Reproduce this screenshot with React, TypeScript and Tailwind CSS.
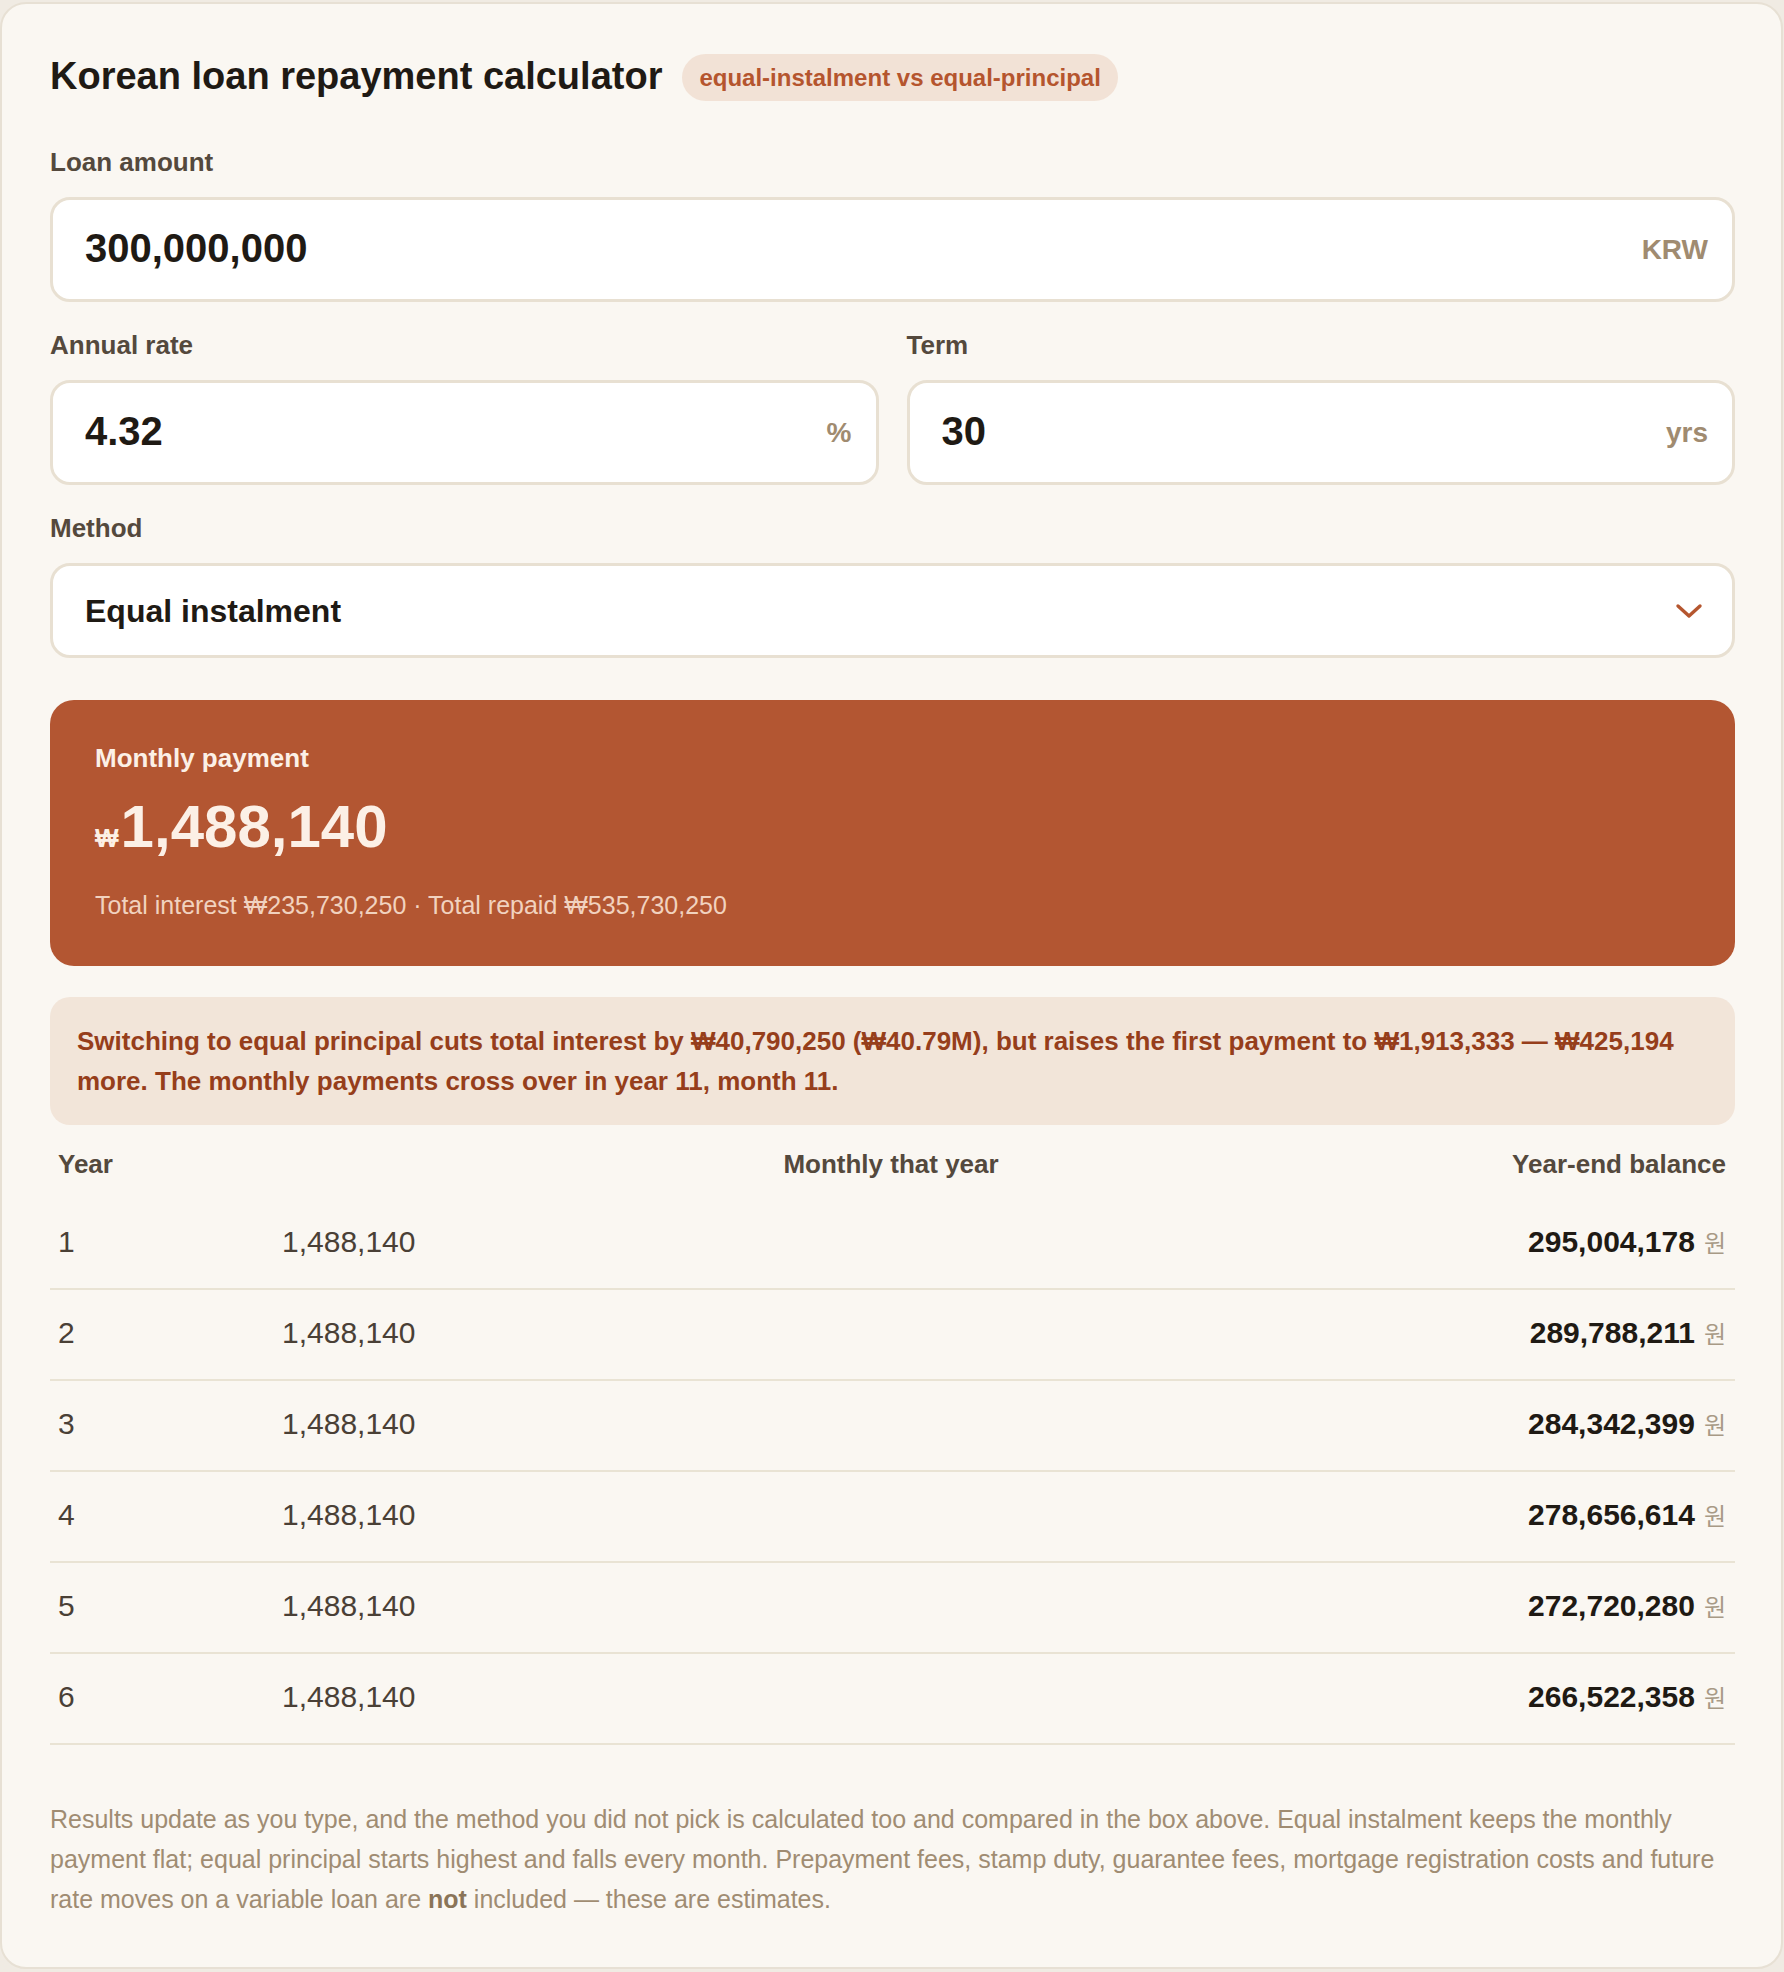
const rows = [
  { year: 1, monthly: "1,488,140", balance: "295,004,178" },
  { year: 2, monthly: "1,488,140", balance: "289,788,211" },
  { year: 3, monthly: "1,488,140", balance: "284,342,399" },
  { year: 4, monthly: "1,488,140", balance: "278,656,614" },
  { year: 5, monthly: "1,488,140", balance: "272,720,280" },
  { year: 6, monthly: "1,488,140", balance: "266,522,358" },
];

function Label({ children, className = "" }: { children: React.ReactNode; className?: string }) {
  return (
    <div className={`text-[26px] font-bold leading-[38px] text-[#54493d] mb-[16px] ${className}`}>{children}</div>
  );
}

function Field({ value, unit }: { value: string; unit: string }) {
  return (
    <div className="flex h-[105px] items-center rounded-[20px] border-[3px] border-[#e8e0d2] bg-white pl-[32px] pr-[24px]">
      <input
        readOnly
        value={value}
        className="mb-[4px] min-w-0 flex-1 bg-transparent text-[40px] font-bold text-[#1f1a14] outline-none"
      />
      <span className="text-[28px] font-bold text-[#a08b70]">{unit}</span>
    </div>
  );
}

export default function App() {
  return (
    <div className="min-h-screen bg-[#f0ebe3] pt-[2px] pr-[1px] font-['Liberation_Sans',Arial,sans-serif]">
      <div className="rounded-[26px] border-2 border-[#e7e0d4] bg-[#faf7f2] pl-[48px] pr-[46px] pt-[50px] pb-[48px]">
        {/* Heading */}
        <div className="flex h-[47px] items-center gap-[20px]">
          <h1 className="mb-[2px] text-[38px] font-bold text-[#1f1a14]">Korean loan repayment calculator</h1>
          <span className="flex h-[47px] items-center rounded-full bg-[#f2e2d6] px-[17px] text-[24px] font-bold text-[#b5552e]">
            equal-instalment vs equal-principal
          </span>
        </div>

        {/* Inputs */}
        <Label className="mt-[42px]">Loan amount</Label>
        <Field value="300,000,000" unit="KRW" />

        <div className="mt-[24px] grid grid-cols-2 gap-x-[28px]">
          <div>
            <Label>Annual rate</Label>
            <Field value="4.32" unit="%" />
          </div>
          <div>
            <Label>Term</Label>
            <Field value="30" unit="yrs" />
          </div>
        </div>

        <Label className="mt-[24px]">Method</Label>
        <div className="flex h-[95px] items-center rounded-[20px] border-[3px] border-[#e8e0d2] bg-white pl-[32px] pr-[28px]">
          <select
            defaultValue="equal-instalment"
            className="min-w-0 flex-1 appearance-none bg-transparent text-[32px] font-bold text-[#1f1a14] outline-none"
          >
            <option value="equal-instalment">Equal instalment</option>
            <option value="equal-principal">Equal principal</option>
          </select>
          <svg width="30" height="18" viewBox="0 0 30 18" fill="none">
            <polyline points="4,4 15,14 26,4" stroke="#b5562f" strokeWidth="3.4" strokeLinecap="round" strokeLinejoin="round" />
          </svg>
        </div>

        {/* Result */}
        <div className="mt-[42px] h-[266px] rounded-[24px] bg-[#b35632] pl-[45px] pt-[40px] text-[#fcf0e6]">
          <div className="text-[26px] font-bold leading-[36px]">Monthly payment</div>
          <div className="mt-[21px] text-[60px] font-bold leading-[60px]">
            <span className="mr-[2px] text-[25px] leading-none">₩</span>1,488,140
          </div>
          <div className="mt-[30px] text-[25px] leading-[36px] text-[#f1d2bf]">
            Total interest ₩235,730,250 · Total repaid ₩535,730,250
          </div>
        </div>

        {/* Comparison */}
        <div className="mt-[31px] rounded-[20px] bg-[#f2e5d9] px-[27px] py-[24px] text-[26px] font-bold leading-[40px] text-[#963e1b]">
          Switching to equal principal cuts total interest by ₩40,790,250 (₩40.79M), but raises the first payment to ₩1,913,333 — ₩425,194 more. The monthly payments cross over in year 11, month 11.
        </div>

        {/* Schedule */}
        <div className="mt-[4px]">
          <div className="grid h-[70px] grid-cols-[223px_1fr_226px] items-center text-[26px] font-bold text-[#54493d]">
            <div className="pl-[8px]">Year</div>
            <div className="text-center">Monthly that year</div>
            <div className="pr-[9px] text-right">Year-end balance</div>
          </div>
          {rows.map((r) => (
            <div
              key={r.year}
              className="grid h-[91px] grid-cols-[223px_1fr_226px] items-center border-b-2 border-[#e9e3d4] pb-[4px] text-[30px] text-[#4a4036]"
            >
              <div className="pl-[8px]">{r.year}</div>
              <div className="pl-[9px]">{r.monthly}</div>
              <div className="flex items-baseline justify-end pr-[9px]">
                <span className="font-bold text-[#1f1a14]">{r.balance}</span>
                <span className="ml-[9px] font-['Noto_Sans_CJK_KR',sans-serif] text-[24px] text-[#a89a86]">원</span>
              </div>
            </div>
          ))}
        </div>

        <p className="mt-[54px] text-[25px] leading-[40px] text-[#a08c72]">
          Results update as you type, and the method you did not pick is calculated too and compared in the box above. Equal instalment keeps the monthly payment flat; equal principal starts highest and falls every month. Prepayment fees, stamp duty, guarantee fees, mortgage registration costs and future rate moves on a variable loan are <strong className="font-bold text-[#8a7458]">not</strong> included — these are estimates.
        </p>
      </div>
    </div>
  );
}
